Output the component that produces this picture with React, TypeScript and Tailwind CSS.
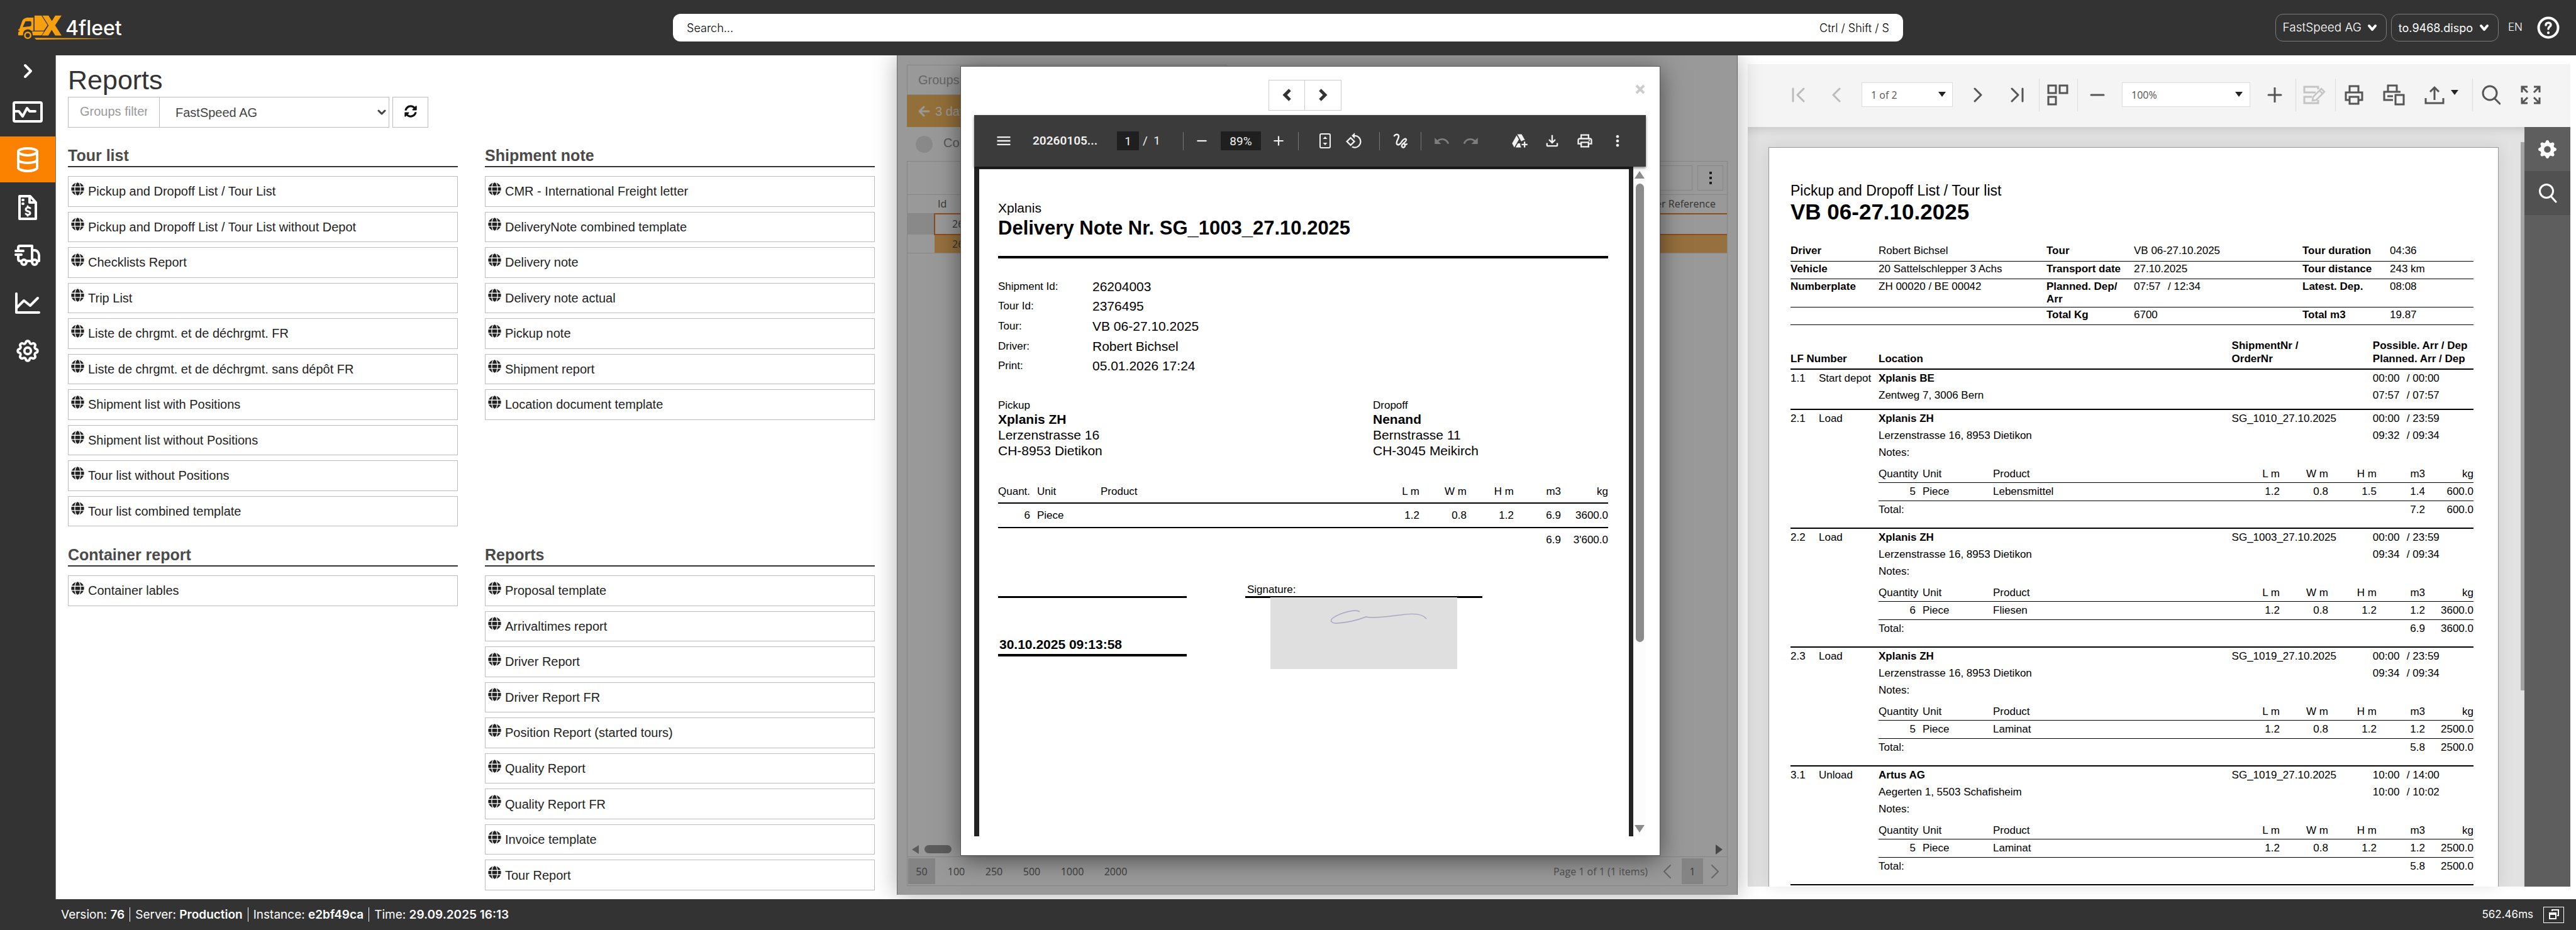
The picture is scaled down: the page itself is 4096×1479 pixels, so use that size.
import React from "react";
import {
  MdMenu,
  MdRemove,
  MdAdd,
  MdUndo,
  MdRedo,
  MdOutlineAddToDrive,
  MdOutlineFileDownload,
  MdOutlinePrint,
  MdMoreVert,
  MdOutlineRotate90DegreesCcw,
} from "react-icons/md";
import { FaGlobe, FaSyncAlt } from "react-icons/fa";
import { TbSettings } from "react-icons/tb";
import { BsGearFill } from "react-icons/bs";

const tourList = [
  "Pickup and Dropoff List / Tour List",
  "Pickup and Dropoff List / Tour List without Depot",
  "Checklists Report",
  "Trip List",
  "Liste de chrgmt. et de déchrgmt. FR",
  "Liste de chrgmt. et de déchrgmt. sans dépôt FR",
  "Shipment list with Positions",
  "Shipment list without Positions",
  "Tour list without Positions",
  "Tour list combined template",
];
const shipmentNote = [
  "CMR - International Freight letter",
  "DeliveryNote combined template",
  "Delivery note",
  "Delivery note actual",
  "Pickup note",
  "Shipment report",
  "Location document template",
];
const containerReport = ["Container lables"];
const reports = [
  "Proposal template",
  "Arrivaltimes report",
  "Driver Report",
  "Driver Report FR",
  "Position Report (started tours)",
  "Quality Report",
  "Quality Report FR",
  "Invoice template",
  "Tour Report",
];

type Stop = {
  nr: string;
  kind: string;
  place: string;
  address: string;
  order: string;
  possible: [string, string];
  planned: [string, string];
  item: string[];
  total: [string, string];
};

const stops: Stop[] = [
  {
    nr: "2.1", kind: "Load", place: "Xplanis ZH", address: "Lerzenstrasse 16, 8953 Dietikon",
    order: "SG_1010_27.10.2025", possible: ["00:00", "23:59"], planned: ["09:32", "09:34"],
    item: ["5", "Piece", "Lebensmittel", "1.2", "0.8", "1.5", "1.4", "600.0"], total: ["7.2", "600.0"],
  },
  {
    nr: "2.2", kind: "Load", place: "Xplanis ZH", address: "Lerzenstrasse 16, 8953 Dietikon",
    order: "SG_1003_27.10.2025", possible: ["00:00", "23:59"], planned: ["09:34", "09:34"],
    item: ["6", "Piece", "Fliesen", "1.2", "0.8", "1.2", "1.2", "3600.0"], total: ["6.9", "3600.0"],
  },
  {
    nr: "2.3", kind: "Load", place: "Xplanis ZH", address: "Lerzenstrasse 16, 8953 Dietikon",
    order: "SG_1019_27.10.2025", possible: ["00:00", "23:59"], planned: ["09:34", "09:34"],
    item: ["5", "Piece", "Laminat", "1.2", "0.8", "1.2", "1.2", "2500.0"], total: ["5.8", "2500.0"],
  },
  {
    nr: "3.1", kind: "Unload", place: "Artus AG", address: "Aegerten 1, 5503 Schafisheim",
    order: "SG_1019_27.10.2025", possible: ["10:00", "14:00"], planned: ["10:00", "10:02"],
    item: ["5", "Piece", "Laminat", "1.2", "0.8", "1.2", "1.2", "2500.0"], total: ["5.8", "2500.0"],
  },
];

type SvgProps = { w: number; h: number; sw?: number; className?: string; children: React.ReactNode };

/** Stroked line icon drawn at its natural pixel size. */
function Icon({ w, h, sw = 3, className, children }: SvgProps) {
  return (
    <svg
      width={w}
      height={h}
      viewBox={`0 0 ${w} ${h}`}
      fill="none"
      stroke="currentColor"
      strokeWidth={sw}
      strokeLinecap="round"
      strokeLinejoin="round"
      className={className}
      aria-hidden="true"
    >
      {children}
    </svg>
  );
}

function Caret({ className }: { className?: string }) {
  return (
    <svg width="12" height="8" viewBox="0 0 12 8" className={className} aria-hidden="true">
      <path d="M0 0h12L6 8z" fill="currentColor" />
    </svg>
  );
}

function Logo() {
  return (
    <a href="#home" aria-label="X 4fleet" className="relative ml-[28px] block h-[40px] w-[174px] text-white">
      <svg viewBox="116 48 712 162" width="174" height="40" className="block" aria-hidden="true">
        <defs>
          <linearGradient id="swoosh" x1="0" x2="1" y1="0" y2="0">
            <stop offset="0" stopColor="#f7a00e" />
            <stop offset="0.55" stopColor="#f7a00e" />
            <stop offset="1" stopColor="#f7a00e" stopOpacity="0" />
          </linearGradient>
        </defs>
        <path
          fill="#f7a00e"
          fillRule="evenodd"
          d="M184 64h35v85h-13c-7-7-16-9-24-9-15 0-27 9-29 23l-3 16h-30v-22l10-3-3-6-7-1v-6l8-4 17-49c4-14 20-24 39-24zm-17 23-18 39 44-5c7-1 12-4 12-9V95c0-5-3-8-8-8z"
        />
        <path fill="#f7a00e" d="M226 50h45l40 63-24 35h-61z" />
        <path fill="#f7a00e" d="M208 154h80l-16 25h-58c0-11-2-18-6-25z" />
        <path fill="#f7a00e" d="M277 50h40l22 36 22-36h41l-42 64 42 66h-41l-23-37-22 37h-41l43-65z" />
        <circle cx="182" cy="179" r="19" fill="none" stroke="#f7a00e" strokeWidth="10" />
        <path fill="url(#swoosh)" d="M225 195l300 3 300 5-300 1-288 3z" />
      </svg>
      <span className="absolute top-[2px] left-[76px] text-[32px] leading-[38px] font-medium">4fleet</span>
    </a>
  );
}

function SideItem({ label, active, children }: { label: string; active?: boolean; children: React.ReactNode }) {
  return (
    <button
      type="button"
      aria-label={label}
      className={
        active
          ? "flex h-[73px] w-full items-center justify-center bg-[#fa8200] text-white"
          : "flex h-[73px] w-full items-center justify-center text-white"
      }
    >
      {children}
    </button>
  );
}

function Sidebar() {
  return (
    <nav className="flex w-[88px] shrink-0 flex-col gap-[3px] bg-[#333]">
      <button type="button" aria-label="Expand" className="flex h-[50px] w-full items-center justify-center text-white">
        <Icon w={16} h={24} sw={4}>
          <path d="M4 3l9 9-9 9" />
        </Icon>
      </button>
      <SideItem label="Monitor">
        <Icon w={50} h={36} sw={4}>
          <rect x="3" y="3" width="44" height="30" rx="2" />
          <path d="M4 17h7l6 8 7-13 4 5h9" />
        </Icon>
      </SideItem>
      <SideItem label="Reports" active>
        <Icon w={36} h={42} sw={4}>
          <path d="M3 8v26c0 2 7 5 15 5s15-3 15-5V8" />
          <path d="M3 8c0-3 7-5 15-5s15 2 15 5-7 6-15 6S3 11 3 8z" />
          <path d="M3 21c0 3 7 5 15 5s15-2 15-5" />
        </Icon>
      </SideItem>
      <SideItem label="Invoices">
        <Icon w={32} h={42} sw={4}>
          <path d="M3 3h17l9 10v26H3z" />
          <path d="M19 4v9h9" />
          <path d="M8 9h1M8 15h1" />
          <path d="M20 22c-2-2-7-1-7 2 0 4 7 2 7 6 0 3-5 3-7 1M16 19v2M16 33v1" strokeWidth="3" />
        </Icon>
      </SideItem>
      <SideItem label="Vehicles">
        <Icon w={42} h={34} sw={4}>
          <path d="M6 10V5c0-2 1-3 3-3h19v24H19M6 18v5c0 2 1 3 3 3" />
          <path d="M2 10h12M2 16h9" />
          <path d="M28 9h4c4 0 7 4 7 8v9h-2" />
          <circle cx="15" cy="28" r="4" />
          <circle cx="32" cy="28" r="4" />
        </Icon>
      </SideItem>
      <SideItem label="Statistics">
        <Icon w={42} h={36} sw={4}>
          <path d="M3 3v30h36" />
          <path d="M4 25l11-11 10 8 12-12" />
        </Icon>
      </SideItem>
      <SideItem label="Settings">
        <TbSettings size={42} strokeWidth={2.2} />
      </SideItem>
    </nav>
  );
}

function Header() {
  const pill = "flex h-11 items-center rounded-xl border border-[#7c7c7c]";
  return (
    <header className="grid h-[88px] shrink-0 grid-cols-[minmax(0,1fr)_47.75%_minmax(0,1fr)] items-center bg-[#333] font-['Inter',sans-serif] text-[18px] font-light text-white">
      <div className="flex items-center">
        <Logo />
      </div>
      <label className="flex h-11 items-center rounded-xl bg-white px-[22px] text-black">
        <input
          aria-label="Search"
          placeholder="Search..."
          className="flex-1 bg-transparent font-light outline-none placeholder:text-black"
        />
        <span>Ctrl / Shift / S</span>
      </label>
      <div className="flex items-center justify-end gap-[7px] pr-[26px]">
        <button type="button" className={pill + " gap-[9px] pr-[14px] pl-[11px] text-[19px]"}>
          FastSpeed AG
          <Icon w={16} h={12} sw={4}>
            <path d="M3 3l5 6 5-6" />
          </Icon>
        </button>
        <button type="button" className={pill + " gap-[10px] pr-[14px] pl-[11px] font-normal"}>
          to.9468.dispo
          <Icon w={16} h={12} sw={4}>
            <path d="M3 3l5 6 5-6" />
          </Icon>
        </button>
        <button type="button" className="ml-2 text-[17px]">
          EN
        </button>
        <button type="button" aria-label="Help" className="ml-4">
          <Icon w={36} h={36} sw={4}>
            <circle cx="18" cy="18" r="15.5" />
            <path d="M14 14c0-5 8-5 8-.5 0 3-4 3-4 6.500" strokeWidth="3.5" />
            <path d="M18 26v.2" />
          </Icon>
        </button>
      </div>
    </header>
  );
}

function ReportGroup({
  title,
  items,
  rows,
}: {
  title: string;
  items: string[];
  rows: string;
}) {
  return (
    <section>
      <h2 className="h-[35px] border-b-2 border-[#333] text-[25px] leading-8 font-bold text-[#4a4a4a]">{title}</h2>
      <ul className={rows}>
        {items.map((item) => (
          <li key={item}>
            <button
              type="button"
              className="flex h-full w-full items-center gap-1.5 border border-[#bdbdbd] px-1 text-[20px] text-[#222]"
            >
              <FaGlobe size={21} className="mb-2 shrink-0" />
              {item}
            </button>
          </li>
        ))}
      </ul>
    </section>
  );
}

function ReportsPanel() {
  const ten = "mt-[14px] grid h-[557px] grid-rows-10 gap-2";
  const nine = "mt-[14px] grid h-[501px] grid-rows-9 gap-2";
  return (
    <section className="border-l border-[#777] bg-white pt-[15px] pr-[35px] pl-[19px]">
      <h1 className="text-[43px] leading-[48px] text-[#333]">Reports</h1>
      <div className="mt-[3px] flex h-[49px] text-[20px]">
        <input
          aria-label="Groups filter"
          placeholder="Groups filter"
          className="w-[146px] border border-[#bdbdbd] pr-[19px] pb-1 pl-[18px] outline-none placeholder:text-[#999]"
        />
        <div className="relative">
          <select
            aria-label="Company"
            className="h-full w-[365px] appearance-none border border-l-0 border-[#bdbdbd] bg-white px-[25px] text-[#444]"
          >
            <option>FastSpeed AG</option>
          </select>
          <Icon w={14} h={10} sw={3} className="pointer-events-none absolute top-5 right-[5px] text-[#444]">
            <path d="M2 2l5 5 5-5" />
          </Icon>
        </div>
        <button
          type="button"
          aria-label="Refresh"
          className="ml-[5px] flex w-[57px] items-center justify-center border border-[#bdbdbd] pb-1 text-[#111]"
        >
          <FaSyncAlt size={20} />
        </button>
      </div>
      <div className="mt-7 grid grid-cols-2 gap-x-[43px] gap-y-[29px]">
        <ReportGroup title="Tour list" items={tourList} rows={ten} />
        <ReportGroup title="Shipment note" items={shipmentNote} rows={ten} />
        <ReportGroup title="Container report" items={containerReport} rows={nine} />
        <ReportGroup title="Reports" items={reports} rows={nine} />
      </div>
    </section>
  );
}

function ShipmentGrid() {
  return (
    <div className="flex h-full flex-col px-[15px] pt-[15px] pb-[14px]">
      <div className="flex h-12 w-[509px] text-[20px]">
        <input
          aria-label="Groups"
          placeholder="Groups filter"
          className="w-[146px] border border-[#e0e0e0] px-[17px] placeholder:text-[#aaa]"
        />
        <div className="flex-1 border border-l-0 border-[#e0e0e0]" />
      </div>
      <button
        type="button"
        className="flex h-[51px] w-[509px] items-center gap-2 bg-[#f5b95f] px-[17px] text-[20px] text-white"
      >
        <Icon w={20} h={20} sw={3}>
          <path d="M18 10H3M10 3l-7 7 7 7" />
        </Icon>
        3 days
      </button>
      <div className="flex h-[54px] items-center gap-[17px] px-[14px] text-[20px] text-[#8f8f8f]">
        <span className="size-[27px] rounded-full bg-[#e4e4e4]" />
        <span className="pb-1">Completed</span>
      </div>
      <div className="flex min-h-0 flex-1 flex-col border border-[#e0e0e0] font-['Open_Sans',sans-serif] text-[16px] text-[#555]">
        <div className="flex h-[52px] items-center justify-end gap-2 pr-1.5">
          <div className="h-10 w-[260px] border border-[#e0e0e0]" />
          <button type="button" aria-label="Columns" className="flex h-10 w-[41px] items-center justify-center border border-[#e0e0e0]">
            <svg width="4" height="20" viewBox="0 0 4 20" fill="#333" aria-hidden="true">
              <path d="M0 0h4v4H0zM0 8h4v4H0zM0 16h4v4H0z" />
            </svg>
          </button>
        </div>
        <table className="w-full table-fixed border-collapse">
          <colgroup>
            <col className="w-[43px]" />
            <col className="w-[110px]" />
            <col />
          </colgroup>
          <thead>
            <tr className="h-[30px] border-y border-[#e0e0e0]">
              <th />
              <th className="pl-[5px] text-left font-normal">Id</th>
              <th className="pr-[18px] text-right font-normal">Customer Reference</th>
            </tr>
          </thead>
          <tbody>
            <tr className="h-[33px]">
              <td className="bg-[#e4e4e4]" />
              <td className="border-2 border-r-0 border-[#ee7f2f] pl-[27px]">26204003</td>
              <td className="border-y-2 border-[#ee7f2f]" />
            </tr>
            <tr className="h-[29px]">
              <td />
              <td className="bg-[#fbbb68] pl-[28px]">26204004</td>
              <td className="bg-[#fbbb68]" />
            </tr>
          </tbody>
        </table>
        <div className="flex-1 border-t border-[#e0e0e0]" />
        <div className="flex h-[23px] items-center justify-between px-[7px] text-[#999]">
          <div className="flex items-center gap-[9px]">
            <svg width="11" height="14" viewBox="0 0 11 14" aria-hidden="true">
              <path d="M11 0v14L0 7z" fill="currentColor" />
            </svg>
            <span className="h-[13px] w-[43px] rounded-full bg-[#999]" />
          </div>
          <svg width="11" height="16" viewBox="0 0 11 16" aria-hidden="true">
            <path d="M0 0v16l11-8z" fill="#777" />
          </svg>
        </div>
        <div className="flex h-[46px] items-center border-t border-[#e0e0e0] pr-3 pl-px text-[#666]">
          <button type="button" className="h-[41px] w-[43px] bg-[#dcdcdc]">50</button>
          <button type="button" className="w-[67px]">100</button>
          <button type="button" className="w-[53px]">250</button>
          <button type="button" className="w-[67px]">500</button>
          <button type="button" className="w-[62px]">1000</button>
          <button type="button" className="w-[76px]">2000</button>
          <span className="ml-auto text-[#888]">Page 1 of 1 (1 items)</span>
          <button type="button" aria-label="Previous" className="ml-6 text-[#aaa]">
            <Icon w={14} h={22} sw={2}>
              <path d="M12 1L2 11l10 10" />
            </Icon>
          </button>
          <button type="button" className="ml-4 h-[41px] w-[34px] bg-[#dcdcdc]">1</button>
          <button type="button" aria-label="Next" className="ml-3 text-[#aaa]">
            <Icon w={14} h={22} sw={2}>
              <path d="M2 1l10 10L2 21" />
            </Icon>
          </button>
        </div>
      </div>
    </div>
  );
}

function PdfToolbar() {
  const sep = "h-[29px] w-px bg-[#777]";
  return (
    <div className="relative z-10 flex h-[82px] shrink-0 items-center bg-[#3b3b3b] pr-[31px] pl-[33px] font-['Roboto',sans-serif] text-[19px] text-[#f1f1f1] shadow-[0_2px_4px_rgba(0,0,0,0.5)]">
      <button type="button" aria-label="Menu"><MdMenu size={28} /></button>
      <span className="ml-[32px] w-[104px] font-semibold">20260105...</span>
      <input aria-label="Page" defaultValue="1" className="ml-[30px] h-[30px] w-[35px] bg-[#1f1f1f] text-center" />
      <span className="ml-[6px] w-[64px]">/ &nbsp;1</span>
      <span className={sep} />
      <button type="button" aria-label="Zoom out" className="ml-[16px]"><MdRemove size={26} /></button>
      <input aria-label="Zoom" defaultValue="89%" className="ml-[17px] h-[30px] w-[64px] bg-[#1f1f1f] text-center" />
      <button type="button" aria-label="Zoom in" className="ml-[15px]"><MdAdd size={26} /></button>
      <span className={sep + " ml-[18px]"} />
      <button type="button" aria-label="Fit to page" className="ml-[32px]">
        <Icon w={20} h={26} sw={2}>
          <rect x="2" y="2" width="16" height="22" rx="2" />
          <path d="M6.5 10L10 6l3.500 4zM6.500 16l3.500 4 3.500-4z" fill="currentColor" strokeWidth="0" />
        </Icon>
      </button>
      <button type="button" aria-label="Rotate" className="ml-[22px]"><MdOutlineRotate90DegreesCcw size={28} /></button>
      <span className={sep + " ml-[26px]"} />
      <button type="button" aria-label="Draw" className="ml-[21px]">
        <Icon w={24} h={26} sw={2.4}>
          <path d="M2 5c2-3 6-3 7 0 1 4-5 9-3 13 2 3 6 0 8-4 2-3 6-6 7-3 1 3-6 6-7 9-1 4 4 5 5 1 0-2-1-3-2-4 2 2 4 2 5 1" />
        </Icon>
      </button>
      <span className={sep + " ml-[20px]"} />
      <button type="button" aria-label="Undo" className="ml-[19px] text-[#7d7d7d]"><MdUndo size={27} /></button>
      <button type="button" aria-label="Redo" className="ml-[19px] text-[#7d7d7d]"><MdRedo size={27} /></button>
      <button type="button" aria-label="Save to drive" className="ml-auto"><MdOutlineAddToDrive size={28} /></button>
      <button type="button" aria-label="Download" className="ml-6"><MdOutlineFileDownload size={28} /></button>
      <button type="button" aria-label="Print" className="ml-6"><MdOutlinePrint size={28} /></button>
      <button type="button" aria-label="More" className="ml-6"><MdMoreVert size={28} /></button>
    </div>
  );
}

const noteInfo = [
  ["Shipment Id:", "26204003"],
  ["Tour Id:", "2376495"],
  ["Tour:", "VB 06-27.10.2025"],
  ["Driver:", "Robert Bichsel"],
  ["Print:", "05.01.2026 17:24"],
];

function DeliveryNote() {
  return (
    <article className="min-h-0 flex-1 overflow-hidden bg-white pt-[50px] pr-[33px] pl-[30px] text-[17px] leading-5 text-black">
      <p className="text-[21px] leading-6">Xplanis</p>
      <h2 className="mt-0.5 text-[31px] leading-9 font-bold">Delivery Note Nr. SG_1003_27.10.2025</h2>
      <dl className="mt-[26px] grid h-[191px] grid-cols-[150px_1fr] grid-rows-5 items-center border-t-4 border-black pt-[29px]">
        {noteInfo.map(([k, v]) => (
          <React.Fragment key={k}>
            <dt>{k}</dt>
            <dd className="text-[21px]">{v}</dd>
          </React.Fragment>
        ))}
      </dl>
      <div className="mt-[38px] grid grid-cols-[596fr_374fr] text-[21px] leading-[25px]">
        <div>
          <p className="text-[17px] leading-[18px]">Pickup</p>
          <p className="font-bold">Xplanis ZH</p>
          <p>Lerzenstrasse 16</p>
          <p>CH-8953 Dietikon</p>
        </div>
        <div>
          <p className="text-[17px] leading-[18px]">Dropoff</p>
          <p className="font-bold">Nenand</p>
          <p>Bernstrasse 11</p>
          <p>CH-3045 Meikirch</p>
        </div>
      </div>
      <table className="mt-[43px] w-full table-fixed text-right">
        <colgroup>
          <col className="w-[62px]" />
          <col className="w-[101px]" />
          <col />
          <col className="w-[75px]" />
          <col className="w-[75px]" />
          <col className="w-[75px]" />
          <col className="w-[75px]" />
          <col className="w-[75px]" />
        </colgroup>
        <thead>
          <tr className="h-[28px] border-b-2 border-black align-top [&>th]:font-normal">
            <th className="text-left">Quant.</th>
            <th className="text-left">Unit</th>
            <th className="text-left">Product</th>
            <th>L m</th>
            <th>W m</th>
            <th>H m</th>
            <th>m3</th>
            <th>kg</th>
          </tr>
        </thead>
        <tbody>
          <tr className="h-[39px] border-b-2 border-black">
            <td className="pr-[11px]">6</td>
            <td className="text-left">Piece</td>
            <td />
            <td>1.2</td>
            <td>0.8</td>
            <td>1.2</td>
            <td>6.9</td>
            <td>3600.0</td>
          </tr>
          <tr className="h-[38px]">
            <td colSpan={6} />
            <td>6.9</td>
            <td>3&#39;600.0</td>
          </tr>
        </tbody>
      </table>
      <div className="mt-[51px] flex">
        <div className="w-[300px]">
          <div className="h-[23px] border-b-[3px] border-black" />
          <p className="mt-[61px] border-b-4 border-black pb-0.5 pl-0.5 text-[21px] leading-[26px] font-bold">
            30.10.2025 09:13:58
          </p>
        </div>
        <div className="ml-[93px] w-[377px]">
          <p className="h-[23px] border-b-[3px] border-black pl-[3px]">Signature:</p>
          <div className="relative -mt-px ml-10 h-[114px] w-[297px] bg-[#dfdfdf]">
            <svg width="297" height="114" viewBox="0 0 297 114" fill="none" stroke="#a9a6c4" strokeWidth="1.5" aria-hidden="true">
              <path d="M142 23c-6-5-30 1-43 10-6 5 0 9 8 8 15-1 32-5 45-10 14 3 36-1 55-3 19-3 35-2 41 6" />
            </svg>
          </div>
        </div>
      </div>
    </article>
  );
}

function NoteDialog() {
  return (
    <div className="absolute inset-0 flex bg-black/40 pt-[17px] pr-[122px] pb-[62px] pl-[100px]">
      <div
        role="dialog"
        aria-label="Delivery note"
        className="relative flex flex-1 flex-col border border-[#555] bg-white pt-[21px] pr-[22px] pb-[30px] pl-[21px] shadow-[0_6px_36px_rgba(0,0,0,0.5)]"
      >
        <div className="mr-4 flex h-[49px] shrink-0 justify-center text-[#333]">
          <button type="button" aria-label="Previous note" className="-mr-px flex w-[58px] items-center justify-center border border-[#ccc] pb-0.5">
            <svg width="14" height="20" viewBox="0 0 14 20" fill="none" stroke="currentColor" strokeWidth="5" aria-hidden="true">
              <path d="M12 2l-8 8 8 8" />
            </svg>
          </button>
          <button type="button" aria-label="Next note" className="flex w-[59px] items-center justify-center border border-[#ccc] pb-0.5">
            <svg width="14" height="20" viewBox="0 0 14 20" fill="none" stroke="currentColor" strokeWidth="5" aria-hidden="true">
              <path d="M2 2l8 8-8 8" />
            </svg>
          </button>
        </div>
        <button type="button" aria-label="Close" className="absolute top-[28px] right-[23px] text-[#ccc]">
          <svg width="16" height="16" viewBox="0 0 16 16" fill="none" stroke="currentColor" strokeWidth="4" aria-hidden="true">
            <path d="M2 2l12 12M14 2L2 14" />
          </svg>
        </button>
        <div className="mt-[7px] flex min-h-0 flex-1 flex-col">
          <PdfToolbar />
          <div className="flex min-h-0 flex-1">
            <div className="flex flex-1 bg-[#222] pt-1 pr-[7px] pl-2">
              <DeliveryNote />
            </div>
            <div className="flex w-5 flex-col items-center bg-[#fcfcfc] pt-[7px] pb-1.5 text-[#8b8b8b]">
              <svg width="16" height="12" viewBox="0 0 16 12" className="shrink-0" aria-hidden="true">
                <path d="M8 0l8 12H0z" fill="currentColor" />
              </svg>
              <span className="mt-2 w-[13px] flex-[730] rounded-full bg-[#8b8b8b]" />
              <span className="flex-[291]" />
              <svg width="16" height="12" viewBox="0 0 16 12" className="shrink-0" aria-hidden="true">
                <path d="M8 12L0 0h16z" fill="currentColor" />
              </svg>
            </div>
          </div>
        </div>
      </div>
    </div>
  );
}

function ViewerToolbar() {
  const sep = "h-[52px] w-px bg-[#dcdcdc]";
  const select = "h-[39px] appearance-none border border-[#dcdcdc] bg-white px-[14px]";
  return (
    <div className="flex h-[100px] shrink-0 items-center bg-[#f4f4f4] pr-[47px] pb-[3px] pl-[69px] font-['Open_Sans',sans-serif] text-[16px] text-[#555]">
      <button type="button" aria-label="First page" className="text-[#bbb]">
        <Icon w={22} h={24} sw={3}>
          <path d="M3 2v20M20 2l-10 10 10 10" />
        </Icon>
      </button>
      <button type="button" aria-label="Previous page" className="ml-[42px] text-[#bbb]">
        <Icon w={16} h={24} sw={3}>
          <path d="M13 2L3 12l10 10" />
        </Icon>
      </button>
      <div className="relative ml-[32px]">
        <select aria-label="Page" className={select + " w-[145px]"}>
          <option>1 of 2</option>
        </select>
        <Caret className="pointer-events-none absolute top-[15px] right-[11px] text-[#222]" />
      </div>
      <button type="button" aria-label="Next page" className="ml-[32px]">
        <Icon w={16} h={24} sw={3}>
          <path d="M3 2l10 10L3 22" />
        </Icon>
      </button>
      <button type="button" aria-label="Last page" className="ml-[44px]">
        <Icon w={22} h={24} sw={3}>
          <path d="M2 2l10 10L2 22M19 2v20" />
        </Icon>
      </button>
      <span className={sep + " ml-[23px]"} />
      <button type="button" aria-label="Multipage" className="ml-[12px]">
        <svg width="34" height="34" viewBox="0 0 34 34" fill="none" stroke="currentColor" strokeWidth="3" aria-hidden="true">
          <path d="M2 2h12v12H2zM20 2h12v12H20zM2 20h12v12H2z" />
        </svg>
      </button>
      <span className={sep + " ml-[14px]"} />
      <button type="button" aria-label="Zoom out" className="ml-[19px]">
        <Icon w={24} h={24} sw={3}>
          <path d="M2 12h20" />
        </Icon>
      </button>
      <div className="relative ml-[27px]">
        <select aria-label="Zoom" className={select + " w-[204px]"}>
          <option>100%</option>
        </select>
        <Caret className="pointer-events-none absolute top-[15px] right-[12px] text-[#222]" />
      </div>
      <button type="button" aria-label="Zoom in" className="ml-[27px]">
        <Icon w={24} h={24} sw={3}>
          <path d="M2 12h20M12 1v22" />
        </Icon>
      </button>
      <span className={sep + " ml-[21px]"} />
      <button type="button" aria-label="Edit fields" className="ml-[11px] text-[#c4c4c4]">
        <svg width="36" height="32" viewBox="0 0 36 32" fill="none" stroke="currentColor" strokeWidth="3" aria-hidden="true">
          <path d="M24 7V3H2v9h18M14 19H2v10h22v-5" />
          <path d="M15 25l1-6L29 6l5 5-13 13zM26 9l5 5" strokeWidth="2.5" />
        </svg>
      </button>
      <span className={sep + " ml-[15px]"} />
      <button type="button" aria-label="Print" className="ml-[13px]">
        <svg width="32" height="32" viewBox="0 0 32 32" fill="none" stroke="currentColor" strokeWidth="3" aria-hidden="true">
          <path d="M9 12V2h14v10M8 24H3V12h26v12h-5M9 19h14v11H9z" />
        </svg>
      </button>
      <button type="button" aria-label="Print page" className="ml-[30px]">
        <svg width="36" height="34" viewBox="0 0 36 34" fill="none" stroke="currentColor" strokeWidth="3" aria-hidden="true">
          <path d="M8 11V2h14v9M16 25H2V12h26M7 19h9M20 17h13v15H20z" />
        </svg>
      </button>
      <button type="button" aria-label="Export" className="ml-[30px] flex items-center gap-[10px]">
        <svg width="32" height="30" viewBox="0 0 32 30" fill="none" stroke="currentColor" strokeWidth="3" aria-hidden="true">
          <path d="M2 20v8h28v-8M16 23V3M9 10l7-7 7 7" />
        </svg>
        <Caret className="mb-2 text-[#222]" />
      </button>
      <span className={sep + " ml-auto"} />
      <button type="button" aria-label="Search" className="ml-[14px]">
        <Icon w={30} h={32} sw={3}>
          <circle cx="13" cy="13" r="11" />
          <path d="M20 21l9 9" />
        </Icon>
      </button>
      <button type="button" aria-label="Full screen" className="ml-[32px]">
        <svg width="32" height="30" viewBox="0 0 32 30" fill="none" stroke="currentColor" strokeWidth="3" aria-hidden="true">
          <path d="M2 11V2h9M3 3l8 8M21 2h9v9M29 3l-8 8M2 19v9h9M3 27l8-8M30 19v9h-9M29 27l-8-8" />
        </svg>
      </button>
    </div>
  );
}

function Times({ from, to }: { from: string; to: string }) {
  return (
    <p className="flex">
      <span className="w-[54px]">{from}</span>
      <span>/ {to}</span>
    </p>
  );
}

const stopCols = "grid grid-cols-[45px_95px_561fr_224fr_160fr]";

function StopBlock({ stop }: { stop: Stop }) {
  return (
    <section className="border-b-2 border-black pb-[13px]">
      <div className={stopCols + " leading-[27px]"}>
        <span>{stop.nr}</span>
        <span>{stop.kind}</span>
        <div>
          <p className="font-bold">{stop.place}</p>
          <p>{stop.address}</p>
          <p>Notes:</p>
        </div>
        <span>{stop.order}</span>
        <div>
          <Times from={stop.possible[0]} to={stop.possible[1]} />
          <Times from={stop.planned[0]} to={stop.planned[1]} />
        </div>
      </div>
      <div className="mt-2 pl-[140px]">
        <table className="w-full table-fixed text-right">
          <colgroup>
            <col className="w-[70px]" />
            <col className="w-[112px]" />
            <col />
            <col className="w-[77px]" />
            <col className="w-[77px]" />
            <col className="w-[77px]" />
            <col className="w-[77px]" />
            <col className="w-[77px]" />
          </colgroup>
          <thead>
            <tr className="h-[27px] border-b border-black [&>th]:font-normal">
              <th className="text-left">Quantity</th>
              <th className="text-left">Unit</th>
              <th className="text-left">Product</th>
              <th>L m</th>
              <th>W m</th>
              <th>H m</th>
              <th>m3</th>
              <th>kg</th>
            </tr>
          </thead>
          <tbody>
            <tr className="h-[29px] border-b border-black">
              {stop.item.map((v, i) => (
                <td key={i} className={i === 0 ? "pr-[11px]" : i < 3 ? "text-left" : ""}>
                  {v}
                </td>
              ))}
            </tr>
            <tr className="h-[29px]">
              <td className="text-left">Total:</td>
              <td colSpan={5} />
              <td>{stop.total[0]}</td>
              <td>{stop.total[1]}</td>
            </tr>
          </tbody>
        </table>
      </div>
    </section>
  );
}

function TourReport() {
  return (
    <article className="min-h-0 flex-1 overflow-hidden border border-b-0 border-[#999] bg-white pt-[54px] pr-[39px] pl-[34px] text-[17px] leading-5 text-black shadow-[0_0_24px_rgba(0,0,0,0.1)]">
      <p className="text-[23px] leading-7">Pickup and Dropoff List / Tour list</p>
      <h2 className="text-[35px] leading-10 font-bold">VB 06-27.10.2025</h2>
      <table className="mt-[30px] w-full table-fixed text-left align-top">
        <colgroup>
          <col className="w-[140px]" />
          <col className="w-[267px]" />
          <col className="w-[139px]" />
          <col className="w-[268px]" />
          <col className="w-[139px]" />
          <col />
        </colgroup>
        <tbody className="[&>tr]:border-b [&>tr]:border-black [&>tr]:align-top [&>tr>*]:pt-[2px]">
          <tr className="h-[28px]">
            <th>Driver</th>
            <td>Robert Bichsel</td>
            <th>Tour</th>
            <td>VB 06-27.10.2025</td>
            <th>Tour duration</th>
            <td>04:36</td>
          </tr>
          <tr className="h-[28px]">
            <th>Vehicle</th>
            <td>20 Sattelschlepper 3 Achs</td>
            <th>Transport date</th>
            <td>27.10.2025</td>
            <th>Tour distance</th>
            <td>243 km</td>
          </tr>
          <tr className="h-[45px]">
            <th>Numberplate</th>
            <td>ZH 00020 / BE 00042</td>
            <th>
              Planned. Dep/
              <br />
              Arr
            </th>
            <td>
              <Times from="07:57" to="12:34" />
            </td>
            <th>Latest. Dep.</th>
            <td>08:08</td>
          </tr>
          <tr className="h-[28px]">
            <td />
            <td />
            <th>Total Kg</th>
            <td>6700</td>
            <th>Total m3</th>
            <td>19.87</td>
          </tr>
        </tbody>
      </table>
      <div className="mt-[22px] grid grid-cols-[140px_561fr_224fr_160fr] items-end border-b-2 border-black pb-[5px] leading-[21px] font-bold">
        <span>LF Number</span>
        <span>Location</span>
        <span>
          ShipmentNr /<br />
          OrderNr
        </span>
        <span className="whitespace-nowrap">
          Possible. Arr / Dep
          <br />
          Planned. Arr / Dep
        </span>
      </div>
      <section className={stopCols + " border-b-2 border-black pb-2 leading-[27px]"}>
        <span>1.1</span>
        <span>Start depot</span>
        <div>
          <p className="font-bold">Xplanis BE</p>
          <p>Zentweg 7, 3006 Bern</p>
        </div>
        <span />
        <div>
          <Times from="00:00" to="00:00" />
          <Times from="07:57" to="07:57" />
        </div>
      </section>
      {stops.map((s) => (
        <StopBlock key={s.nr} stop={s} />
      ))}
    </article>
  );
}

function ReportViewer() {
  return (
    <section className="flex min-h-0 flex-col bg-white pt-[14px] pr-[9px] pb-[20px] pl-[16px]">
      <ViewerToolbar />
      <div className="flex min-h-0 flex-1">
        <div className="flex min-w-0 flex-1 flex-col bg-[#e2e2e2] pt-8 pl-[33px] shadow-[inset_0_12px_14px_-8px_rgba(0,0,0,0.12)]">
          <div className="flex min-h-0 flex-1">
            <TourReport />
            <div className="flex w-[41px] flex-col items-end">
              <span className="-mt-2 w-1.5 flex-[873] bg-[#a3a3a3]" />
              <span className="flex-[312]" />
            </div>
          </div>
        </div>
        <div className="flex w-[73px] flex-col bg-[#5e5e5e] text-white">
          <button type="button" aria-label="Parameters" className="flex h-[70px] items-center justify-center">
            <BsGearFill size={29} />
          </button>
          <button type="button" aria-label="Search in report" className="flex h-[70px] items-center justify-center bg-[#515151]">
            <Icon w={30} h={32} sw={3}>
              <circle cx="13" cy="13" r="10.5" />
              <path d="M20 21l8 9" />
            </Icon>
          </button>
        </div>
      </div>
    </section>
  );
}

const status = [
  ["Version:", "76"],
  ["Server:", "Production"],
  ["Instance:", "e2bf49ca"],
  ["Time:", "29.09.2025 16:13"],
];

function Footer() {
  return (
    <footer className="flex h-[49px] shrink-0 items-center justify-between bg-[#333] pr-[19px] pl-[97px] font-['Inter',sans-serif] text-[19px] text-white">
      <ul className="flex leading-[23px]">
        {status.map(([k, v]) => (
          <li key={k} className="mr-2 border-l border-white pl-2 first:border-l-0 first:pl-0">
            {k} <b className="font-semibold">{v}</b>
          </li>
        ))}
      </ul>
      <div className="flex items-center gap-4">
        <span className="text-[17px]">562.46ms</span>
        <button type="button" aria-label="Windows" className="flex h-[26px] w-[33px] items-center justify-center border border-white">
          <svg width="16" height="17" viewBox="0 0 16 17" fill="none" stroke="currentColor" strokeWidth="2" aria-hidden="true">
            <path d="M5 3V1h10v9h-2M1 6h10v9H1zM1 8h10" />
          </svg>
        </button>
      </div>
    </footer>
  );
}

export default function App() {
  return (
    <div className="flex h-screen w-full flex-col overflow-hidden bg-white font-['Liberation_Sans',Arial,sans-serif]">
      <Header />
      <div className="flex min-h-0 flex-1">
        <Sidebar />
        <main className="grid min-h-0 flex-1 grid-cols-[1338fr_1337fr_1333fr] grid-rows-[minmax(0,1fr)] overflow-hidden bg-white">
          <ReportsPanel />
          <div className="relative z-10 mb-[7px] border-x border-[#666] bg-white shadow-[0_0_36px_rgba(0,0,0,0.3)]">
            <ShipmentGrid />
            <NoteDialog />
          </div>
          <ReportViewer />
        </main>
      </div>
      <Footer />
    </div>
  );
}
